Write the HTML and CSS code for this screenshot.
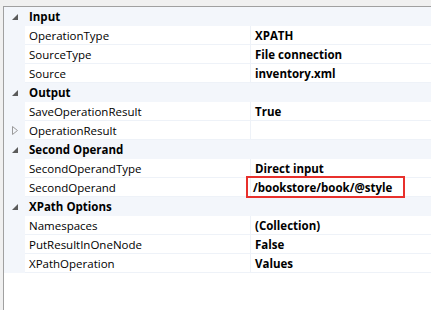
FILE: index.html
```html
<!DOCTYPE html>
<html lang="en">
<head>
  <meta charset="UTF-8">
  <title>Properties</title>
  <link rel="stylesheet" href="styles.css">
</head>
<body>
  <div class="grid">
    <div class="row cat">
      <span class="exp"><svg width="6" height="6" viewBox="0 0 6 6"><polygon points="6,0 6,6 0,6" fill="#5b5b5b"/></svg></span>
      <span class="cat-name">Input</span>
    </div>
    <div class="row"><span class="exp"></span><span class="name">OperationType</span><span class="val">XPATH</span></div>
    <div class="row"><span class="exp"></span><span class="name">SourceType</span><span class="val">File connection</span></div>
    <div class="row"><span class="exp"></span><span class="name">Source</span><span class="val">inventory.xml</span></div>

    <div class="row cat">
      <span class="exp"><svg width="6" height="6" viewBox="0 0 6 6"><polygon points="6,0 6,6 0,6" fill="#5b5b5b"/></svg></span>
      <span class="cat-name">Output</span>
    </div>
    <div class="row"><span class="exp"></span><span class="name">SaveOperationResult</span><span class="val">True</span></div>
    <div class="row">
      <span class="exp"><svg width="6" height="9" viewBox="0 0 6 9"><polygon points="0.5,0.5 5.5,4.5 0.5,8.5" fill="none" stroke="#9a9a9a"/></svg></span>
      <span class="name">OperationResult</span><span class="val"></span>
    </div>

    <div class="row cat">
      <span class="exp"><svg width="6" height="6" viewBox="0 0 6 6"><polygon points="6,0 6,6 0,6" fill="#5b5b5b"/></svg></span>
      <span class="cat-name">Second Operand</span>
    </div>
    <div class="row"><span class="exp"></span><span class="name">SecondOperandType</span><span class="val">Direct input</span></div>
    <div class="row"><span class="exp"></span><span class="name">SecondOperand</span><span class="val"><span class="mark">/bookstore/book/@style</span></span></div>

    <div class="row cat">
      <span class="exp"><svg width="6" height="6" viewBox="0 0 6 6"><polygon points="6,0 6,6 0,6" fill="#5b5b5b"/></svg></span>
      <span class="cat-name">XPath Options</span>
    </div>
    <div class="row"><span class="exp"></span><span class="name">Namespaces</span><span class="val">(Collection)</span></div>
    <div class="row"><span class="exp"></span><span class="name">PutResultInOneNode</span><span class="val">False</span></div>
    <div class="row"><span class="exp"></span><span class="name">XPathOperation</span><span class="val">Values</span></div>
  </div>
</body>
</html>
```

FILE: styles.css
```css
body {
  margin: 0; background: #f0f0f0;
  font-family: "Open Sans", "Noto Sans", Arial, sans-serif; font-size: 11.5px; color: #000;
}
.grid {
  margin: 6px 0 0 3px; height: 303px;
  border-top: 1px solid #a0a0a0; border-left: 1px solid #a0a0a0;
  background: #fff;
}
.row {
  display: flex; height: 19px;
}
.row.cat { background: #f3f6fb; }
.exp {
  width: 21px; flex: none; background: #f3f6fb;
  display: flex; align-items: center; justify-content: flex-end; padding-right: 7px; box-sizing: border-box;
}
.cat-name { font-weight: bold; padding-left: 4px; line-height: 20px; }
.name, .val {
  padding: 1px 0 0 4px; line-height: 17px; box-sizing: border-box;
  border-bottom: 1px solid #eef2f8;
}
.name { width: 225px; flex: none; }
.val { flex: 1; font-weight: bold; border-left: 1px solid #eef2f8; }
.mark {
  display: inline-block; margin: -1px 0 0 -7px; padding: 1px 11px 0 5px; height: 18px; box-sizing: border-box;
  outline: 2px solid #e8302c; vertical-align: top;
}
```
